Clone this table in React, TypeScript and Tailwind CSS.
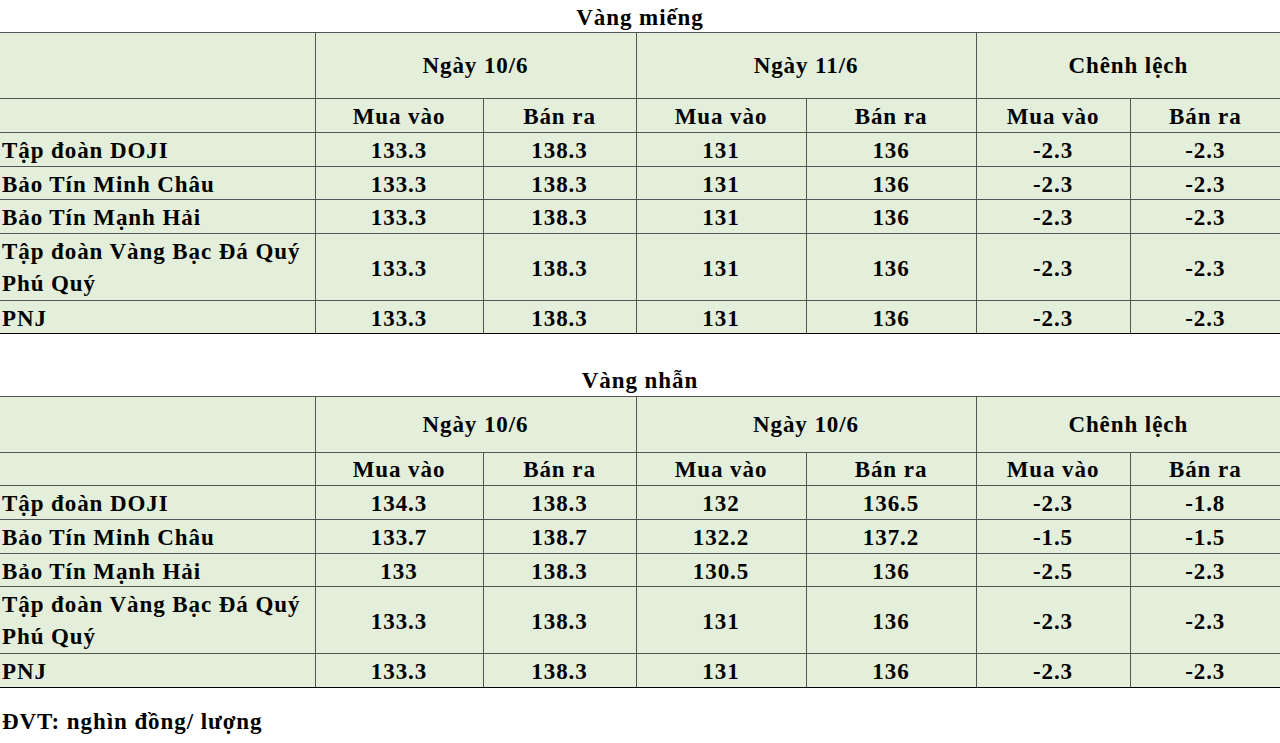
import React from "react";

type Row = { name: React.ReactNode; v: string[]; h: string; multi?: boolean };

const cell = "border border-[#555] p-0 text-center align-middle leading-[26px]";

function GoldTable({
  d1,
  d2,
  headH,
  subH,
  rows,
}: {
  d1: string;
  d2: string;
  headH: string;
  subH: string;
  rows: Row[];
}) {
  const sub = `${cell} pt-[2px]`;
  return (
    <table className="w-[1280px] table-fixed border-collapse bg-[#e3eedb]">
      <colgroup>
        <col className="w-[315px]" />
        <col className="w-[168px]" />
        <col className="w-[153px]" />
        <col className="w-[170px]" />
        <col className="w-[170px]" />
        <col className="w-[154px]" />
        <col className="w-[150px]" />
      </colgroup>
      <tbody>
        <tr className={headH}>
          <td className={`${cell} border-l-0`}></td>
          <td className={cell} colSpan={2}>
            {d1}
          </td>
          <td className={cell} colSpan={2}>
            {d2}
          </td>
          <td className={`${cell} border-r-0`} colSpan={2}>
            Chênh lệch
          </td>
        </tr>
        <tr className={subH}>
          <td className={`${sub} border-l-0`}></td>
          <td className={sub}>Mua vào</td>
          <td className={sub}>Bán ra</td>
          <td className={sub}>Mua vào</td>
          <td className={sub}>Bán ra</td>
          <td className={sub}>Mua vào</td>
          <td className={`${sub} border-r-0`}>Bán ra</td>
        </tr>
        {rows.map((r, i) => (
          <tr key={i} className={r.h}>
            <td
              className={`${cell} border-l-0 pl-[2px] text-left ${
                r.multi ? "pt-[2px] leading-[32px]" : "pt-[3px]"
              } ${i === rows.length - 1 ? "border-b-black" : ""}`}
            >
              {r.name}
            </td>
            {r.v.map((x, j) => (
              <td
                key={j}
                className={`${cell} pt-[3px] ${j === 5 ? "border-r-0" : ""} ${
                  i === rows.length - 1 ? "border-b-black" : ""
                }`}
              >
                {x}
              </td>
            ))}
          </tr>
        ))}
      </tbody>
    </table>
  );
}

const pq = (
  <>
    Tập đoàn Vàng Bạc Đá Quý
    <br />
    Phú Quý
  </>
);

export default function App() {
  const std = ["133.3", "138.3", "131", "136", "-2.3", "-2.3"];
  const rows1: Row[] = [
    { name: "Tập đoàn DOJI", v: std, h: "h-[34px]" },
    { name: "Bảo Tín Minh Châu", v: std, h: "h-[33px]" },
    { name: "Bảo Tín Mạnh Hải", v: std, h: "h-[34px]" },
    { name: pq, v: std, h: "h-[67px]", multi: true },
    { name: "PNJ", v: std, h: "h-[33px]" },
  ];
  const rows2: Row[] = [
    { name: "Tập đoàn DOJI", v: ["134.3", "138.3", "132", "136.5", "-2.3", "-1.8"], h: "h-[34px]" },
    { name: "Bảo Tín Minh Châu", v: ["133.7", "138.7", "132.2", "137.2", "-1.5", "-1.5"], h: "h-[34px]" },
    { name: "Bảo Tín Mạnh Hải", v: ["133", "138.3", "130.5", "136", "-2.5", "-2.3"], h: "h-[33px]" },
    { name: pq, v: std, h: "h-[67px]", multi: true },
    { name: "PNJ", v: std, h: "h-[34px]" },
  ];
  return (
    <div className="w-[1280px] min-h-[743px] bg-white font-['Liberation_Serif','Times_New_Roman',serif] text-[23px] font-bold tracking-[0.04em] text-black">
      <div className="pt-[5px] pb-[1px] text-center leading-[26px]">Vàng miếng</div>
      <GoldTable d1="Ngày 10/6" d2="Ngày 11/6" headH="h-[66px]" subH="h-[34px]" rows={rows1} />
      <div className="flex h-[62px] flex-col justify-end pb-[2px] text-center leading-[26px]">
        Vàng nhẫn
      </div>
      <GoldTable d1="Ngày 10/6" d2="Ngày 10/6" headH="h-[56px]" subH="h-[33px]" rows={rows2} />
      <div className="mt-[21px] pl-[2px] leading-[26px]">ĐVT: nghìn đồng/ lượng</div>
    </div>
  );
}
